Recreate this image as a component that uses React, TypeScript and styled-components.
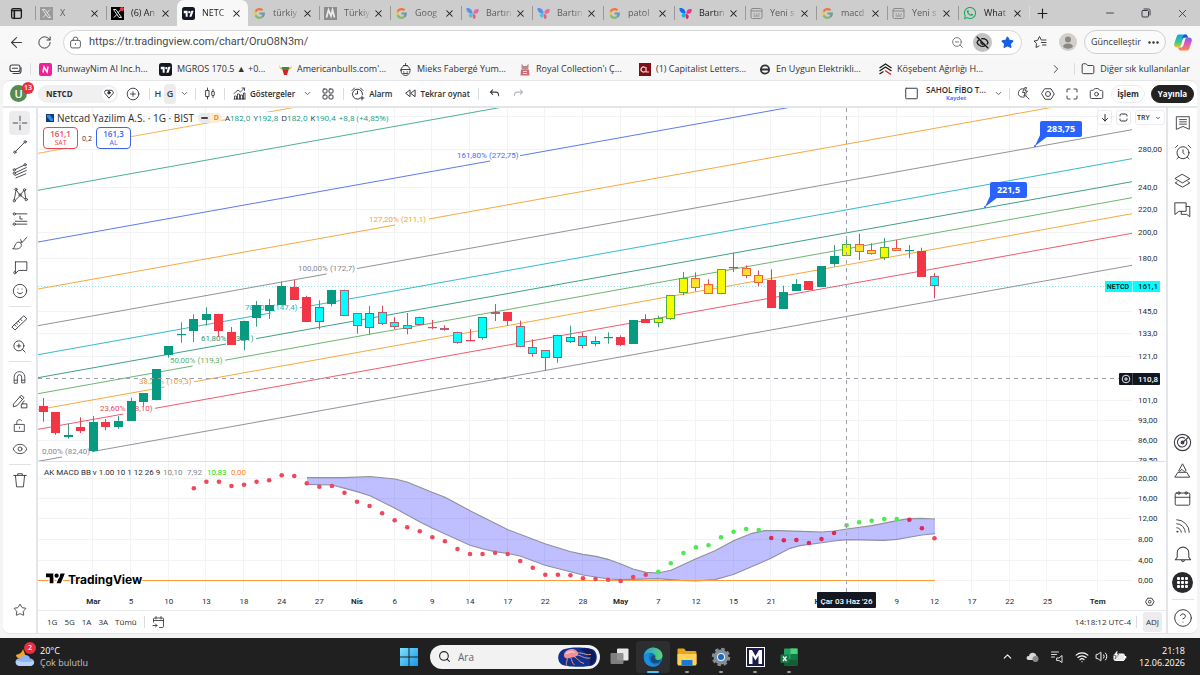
import React from "react";
import styled, { createGlobalStyle, css } from "styled-components";
import {
  X, Plus, Minus, ArrowLeft, RotateCw, ZoomOut, ZoomIn, EyeOff, Star, ChevronDown, ChevronRight, ChevronUp,
  Folder, Camera, Wifi, Volume2, Search, Eye, Smile,
  CircleHelp, AlarmClock, CirclePlus,
} from "lucide-react";
import { FcGoogle } from "react-icons/fc";
import { FaWhatsapp } from "react-icons/fa";

const UI = `"Open Sans", "Noto Sans", sans-serif`;
const NUMERIC = `Roboto, "Open Sans", sans-serif`;
const INK = "#2a2c33";
const STROKE = "#3b3d44";
const RULE = "#e4e5e9";

const GlobalStyle = createGlobalStyle`
  * { box-sizing: border-box; }
  body { margin: 0; background: #f4f4f5; font-family: ${UI}; color: ${INK}; }
  button, input, select { font: inherit; color: inherit; margin: 0; padding: 0; border: 0; background: none; }
  svg { display: block; flex: none; }
`;

/* ---------- shared parts ---------- */

const Page = styled.div`
  min-height: 100vh;
  display: flex;
  flex-direction: column;
`;

const IconButton = styled.button<{ $w?: number; $h?: number; $on?: boolean; $color?: string }>`
  flex: none;
  width: ${(p) => p.$w ?? 24}px;
  height: ${(p) => p.$h ?? 24}px;
  display: flex;
  align-items: center;
  justify-content: center;
  border-radius: 4px;
  color: ${(p) => p.$color ?? STROKE};
  ${(p) => p.$on && css`background: #ececee;`}
`;

const Gap = styled.span<{ $w: number }>`
  flex: none;
  width: ${(p) => p.$w}px;
`;

const Divider = styled.span<{ $h?: number; $mx?: number }>`
  flex: none;
  width: 1px;
  height: ${(p) => p.$h ?? 12}px;
  margin: 0 ${(p) => p.$mx ?? 0}px;
  background: #dcdce0;
`;

const Spacer = styled.span`
  flex: 1;
`;

type DrawProps = { size?: number; w?: number; vb?: string; sw?: number; children: React.ReactNode };
const Draw = ({ size = 16, w, vb = "0 0 28 28", sw = 1.6, children }: DrawProps) => (
  <svg width={w ?? size} height={size} viewBox={vb} fill="none" stroke="currentColor" strokeWidth={sw}
    strokeLinecap="round" strokeLinejoin="round" aria-hidden="true">{children}</svg>
);

/* ---------- favicons ---------- */

const TvTile = ({ size = 13 }: { size?: number }) => (
  <svg width={size} height={size} viewBox="0 0 26 26">
    <rect width="26" height="26" rx="5" fill="#131722" />
    <g fill="#fff" transform="translate(3.500 5) scale(.66)">
      <path d="M14 22H7V11H0V4h14v18ZM28 22h-8l7.500-18h8L28 22Z" transform="scale(.84 1)" /><circle cx="17" cy="8" r="3.500" />
    </g>
  </svg>
);
const XTile = ({ dot = false }: { dot?: boolean }) => (
  <svg width="13" height="13" viewBox="0 0 26 26">
    <rect width="26" height="26" fill={dot ? "#000" : "#777"} />
    <path d="M5 5h5l11 16h-5zM20 5l-6.500 7M12 14.500 6 21" stroke="#fff" strokeWidth="1.800" fill="none" />
    {dot && <circle cx="22" cy="4" r="4" fill="#f23645" />}
  </svg>
);
const MTile = () => (
  <svg width="13" height="13" viewBox="0 0 26 26">
    <rect width="26" height="26" fill="#606060" />
    <path d="M5 21 9 6l5 12 3-12 4 15" stroke="#fff" strokeWidth="3.500" fill="none" />
  </svg>
);
const Butterfly = () => (
  <svg width="13" height="13" viewBox="0 0 26 26">
    <path d="M1 2c8-1 12 4 12 11C7 14 0 10 1 2Z" fill="#0a6ff0" />
    <path d="M13 12c-6 0-10 4-6 8s7-1 6-8Z" fill="#0bb8e8" />
    <path d="M15 13c-1-6 3-10 10-9 2 7-3 11-10 9Z" fill="#f2308b" />
    <path d="M14 14c5 0 7 5 4 9s-6-3-4-9Z" fill="#e8224a" />
  </svg>
);
const PageIcon = () => (
  <Draw size={13} vb="0 0 26 26" sw={2}>
    <rect x="2" y="3" width="22" height="20" rx="3" /><path d="M2 8h22M8 14h1M13 14h1M18 14h1M8 18h10" />
  </Draw>
);

/* ---------- tab strip ---------- */

const TabStrip = styled.header`
  height: 26px;
  display: flex;
  align-items: center;
  background: #cdcdcd;
`;
const TabList = styled.nav`
  display: flex;
  flex: 0 1 994px;
  min-width: 0;
  height: 100%;
  margin-left: 3px;
`;
const Tab = styled.div<{ $active?: boolean; $line?: boolean }>`
  flex: 1 1 0;
  min-width: 0;
  display: flex;
  align-items: center;
  position: relative;
  padding: 0 6px 0 5px;
  ${(p) => p.$active && css`background: #f8f8f8; border-radius: 7px 7px 0 0;`}
  ${(p) => p.$line && css`
    &::before { content: ""; position: absolute; left: 0; top: 6px; height: 14px; width: 1px; background: #999; }
  `}
`;
const TabButton = styled.button<{ $dim?: boolean }>`
  flex: 1;
  min-width: 0;
  display: flex;
  align-items: center;
  gap: 7px;
  text-align: left;
  font-size: 9px;
  line-height: 14px;
  color: ${(p) => (p.$dim ? "#5c5c5c" : "#1b1b1b")};
  svg { opacity: ${(p) => (p.$dim ? 0.6 : 1)}; }
`;
const TabText = styled.span`
  flex: 1;
  min-width: 0;
  overflow: hidden;
  white-space: nowrap;
  margin-right: 2px;
  mask-image: linear-gradient(90deg, #000 65%, transparent);
`;

const tabs: { icon: React.ReactNode; text: string; dim?: boolean; active?: boolean }[] = [
  { icon: <XTile />, text: "X", dim: true },
  { icon: <XTile dot />, text: "(6) An" },
  { icon: <TvTile />, text: "NETC", active: true },
  { icon: <FcGoogle size={13} />, text: "türkiy", dim: true },
  { icon: <MTile />, text: "Türkiy", dim: true },
  { icon: <FcGoogle size={13} />, text: "Goog", dim: true },
  { icon: <Butterfly />, text: "Bartın", dim: true },
  { icon: <Butterfly />, text: "Bartın", dim: true },
  { icon: <FcGoogle size={13} />, text: "patol", dim: true },
  { icon: <Butterfly />, text: "Bartın" },
  { icon: <PageIcon />, text: "Yeni s", dim: true },
  { icon: <FcGoogle size={13} />, text: "macd", dim: true },
  { icon: <PageIcon />, text: "Yeni s", dim: true },
  { icon: <FaWhatsapp size={14} color="#1aa75c" />, text: "What" },
];

const Tabs = () => (
  <TabStrip>
    <IconButton $w={32} aria-label="Sekme işlemleri" $color="#1b1b1b">
      <Draw size={13} vb="0 0 24 24" sw={2.4}><rect x="3" y="3" width="18" height="18" rx="3" /><path d="M3 6.500h18M8 8v13" strokeWidth="3" /></Draw>
    </IconButton>
    <TabList>
      {tabs.map((t, i) => (
        <Tab key={i} $active={t.active} $line={i !== 2 && i !== 3}>
          <TabButton $dim={t.dim}>{t.icon}<TabText>{t.text}</TabText></TabButton>
          <IconButton $w={11} $h={16} $color="#1b1b1b" aria-label="Sekmeyi kapat"><X size={11} strokeWidth={2.2} /></IconButton>
        </Tab>
      ))}
    </TabList>
    <Divider $h={14} />
    <IconButton $w={24} $color="#1b1b1b" aria-label="Yeni sekme"><Plus size={15} strokeWidth={1.8} /></IconButton>
    <Spacer />
    <IconButton $w={36} aria-label="Küçült"><Minus size={12} strokeWidth={1.8} /></IconButton>
    <IconButton $w={36} aria-label="Geri yükle">
      <Draw size={10} vb="0 0 20 20" sw={2}><rect x="2" y="5" width="13" height="13" rx="2" /><path d="M6 2h9q3 0 3 3v9" /></Draw>
    </IconButton>
    <IconButton $w={36} aria-label="Kapat"><X size={13} strokeWidth={1.6} /></IconButton>
  </TabStrip>
);

/* ---------- address row ---------- */

const AddressRow = styled.div`
  height: 32px;
  display: flex;
  align-items: center;
  padding: 0 1px 0 2px;
  background: #f8f8f8;
`;
const AddressField = styled.label`
  flex: 1;
  height: 25px;
  display: flex;
  align-items: center;
  margin: 0 6px 0 5px;
  padding: 0 2px 0 5px;
  border: 1px solid #d6d6d6;
  border-radius: 13px;
  background: #fff;
  color: #5c5c5c;
`;
const AddressInput = styled.input`
  flex: 1;
  min-width: 0;
  margin-left: 7px;
  outline: none;
  font-family: ${NUMERIC};
  font-size: 11px;
  line-height: 16px;
  color: #4a4a4a;
`;
const RoundBadge = styled.span`
  width: 19px;
  height: 19px;
  display: grid;
  place-items: center;
  border-radius: 50%;
  background: #c2c2c2;
  color: #111;
`;
const UpdateButton = styled.button`
  height: 24px;
  width: 82px;
  display: flex;
  align-items: center;
  justify-content: center;
  gap: 7px;
  border: 1px solid #cfcfcf;
  border-radius: 12px;
  background: #fbfbfb;
  font-size: 9px;
  line-height: 14px;
  color: #333;
`;

const Address = () => (
  <AddressRow>
    <IconButton $w={28} aria-label="Geri"><ArrowLeft size={17} strokeWidth={1.5} /></IconButton>
    <IconButton $w={28} aria-label="Yenile"><RotateCw size={15} strokeWidth={1.6} /></IconButton>
    <AddressField>
      <Draw size={13} vb="0 0 24 24" sw={1.8}><rect x="3" y="8" width="18" height="14" rx="3" /><path d="M8 8V5q0-3 4-3t4 3v3M12 14v1.500" /></Draw>
      <AddressInput aria-label="Adres" defaultValue="https://tr.tradingview.com/chart/OruO8N3m/" />
      <IconButton $w={25} aria-label="Uzaklaştır" $color="#777"><ZoomOut size={13} strokeWidth={1.8} /></IconButton>
      <IconButton $w={25} aria-label="İzleme engelleme"><RoundBadge><EyeOff size={13} strokeWidth={2.4} /></RoundBadge></IconButton>
      <IconButton $w={24} aria-label="Sık kullanılan" $color="#1a5fe0"><Star size={13} fill="#1a5fe0" /></IconButton>
    </AddressField>
    <IconButton $w={24} aria-label="Sık kullanılanlar">
      <Draw size={14} vb="0 0 28 28" sw={2}><path d="M16 9 13 3l-4 8-7 1 5 5-1 8 6-3M17 10h9M17 15h9M19 20h7" /></Draw>
    </IconButton>
    <IconButton $w={32} aria-label="Profil">
      <svg width="18" height="18" viewBox="0 0 36 36"><circle cx="18" cy="18" r="18" fill="#d2cfcc" /><circle cx="18" cy="13" r="6" fill="#8b8783" /><path d="M8 27c1-8 19-8 20 0-5 6-15 6-20 0Z" fill="#8b8783" /></svg>
    </IconButton>
    <UpdateButton>Güncelleştir
      <svg width="11" height="3" viewBox="0 0 11 3" fill="#333"><circle cx="1.500" cy="1.500" r="1.200" /><circle cx="5.500" cy="1.500" r="1.200" /><circle cx="9.500" cy="1.500" r="1.200" /></svg>
    </UpdateButton>
    <IconButton $w={33} aria-label="Copilot">
      <svg width="18" height="17" viewBox="0 0 36 34">
        <defs>
          <linearGradient id="cpA" x1="0" y1="0" x2="0" y2="1"><stop offset="0" stopColor="#1a9df0" /><stop offset=".6" stopColor="#3ecf7a" /><stop offset="1" stopColor="#f4c22b" /></linearGradient>
          <linearGradient id="cpB" x1="0" y1="0" x2="0" y2="1"><stop offset="0" stopColor="#7b5cf0" /><stop offset=".5" stopColor="#e45bb8" /><stop offset="1" stopColor="#ff8a3c" /></linearGradient>
        </defs>
        <path d="M10 1h13c3 0 4 3 5 6h-6c-3 0-4 2-5 5l-3 10c-1 3-2 5-5 5H6c-5 0-7-4-5-9L5 6c1-3 2-5 5-5Z" fill="url(#cpA)" />
        <path d="M26 33H13c-3 0-4-3-5-6h6c3 0 4-2 5-5l3-10c1-3 2-5 5-5h3c5 0 7 4 5 9l-4 12c-1 3-2 5-5 5Z" fill="url(#cpB)" />
        <path d="M23 1c-4 0-5 3-6 6l-1 5c1-3 2-5 6-5h6c-1-3-2-6-5-6Z" fill="#1457d0" />
      </svg>
    </IconButton>
  </AddressRow>
);

/* ---------- bookmarks ---------- */

const BookmarkBar = styled.nav`
  height: 22px;
  display: flex;
  align-items: center;
  background: #f7f7f7;
  padding-right: 10px;
`;
const Bookmark = styled.a<{ $w?: number }>`
  flex: 0 1 ${(p) => (p.$w ? p.$w + "px" : "auto")};
  min-width: 0;
  display: flex;
  align-items: center;
  gap: 5px;
  overflow: hidden;
  white-space: nowrap;
  text-decoration: none;
  font-size: 9px;
  line-height: 14px;
  color: #333;
`;

const bookmarks: [React.ReactNode, string][] = [
  [<svg width="13" height="13" viewBox="0 0 26 26"><rect width="26" height="26" rx="4" fill="#f0209a" /><path d="M8 19 10 8l6 10 2-11" stroke="#fff" strokeWidth="3" fill="none" /></svg>, "RunwayNim AI Inc.h..."],
  [<TvTile />, "MGROS 170.5 ▲ +0..."],
  [<svg width="13" height="13" viewBox="0 0 26 26"><path d="M0 2c0 6 3 8 8 8v4H6C2 12-1 7 0 2ZM26 2c0 6-3 8-8 8v4h2c4-2 7-7 6-12Z" fill="#e8b21e" /><path d="M5 8h16l-3 7H8Z" fill="#2f8f3f" /><path d="M7 14h12l-3 10h-6Z" fill="#d3222a" /></svg>, "Americanbulls.com'..."],
  [<Draw size={13} vb="0 0 26 26" sw={1.8}><path d="M13 1v3M9 5h8M4 15C4 9 8 5 13 5s9 4 9 10-4 10-9 10-9-4-9-10ZM4 13h18M9 18h1M16 18h1M9 21h8" /></Draw>, "Mieks Fabergé Yum..."],
  [<svg width="12" height="13" viewBox="0 0 24 26"><path d="M5 1l4 5h6l4-5v9l-2 3H7l-2-3Z" fill="#b98a8a" /><path d="M4 13h16l1 12H3Z" fill="#cf6b74" /><path d="M8 17h8M8 21h8" stroke="#f0d8d8" strokeWidth="2" /></svg>, "Royal Collection'ı Ç..."],
  [<svg width="12" height="13" viewBox="0 0 24 26"><rect width="24" height="26" fill="#7d1016" /><path d="M12 9a5 5 0 1 0 0 8M14 8v10h6" stroke="#f3dcdc" strokeWidth="2.400" fill="none" /></svg>, "(1) Capitalist Letters..."],
  [<Draw size={11} w={12} vb="0 0 24 24" sw={4}><circle cx="12" cy="12" r="9" /><path d="M5 12h14" /></Draw>, "En Uygun Elektrikli..."],
  [<svg width="13" height="12" viewBox="0 0 26 24" fill="none" strokeWidth="2.600"><path d="M1 10 13 2l12 8M1 16l12-8 12 8" stroke="#1a1a1a" /><path d="M1 22l8-5" stroke="#1a1a1a" /><path d="m12 15 12 8" stroke="#d22" /></svg>, "Köşebent Ağırlığı H..."],
];

const Bookmarks = () => (
  <BookmarkBar>
    <IconButton $w={30} aria-label="Kenar çubuğu">
      <Draw size={12} w={13} vb="0 0 26 24" sw={2.2}><rect x="2" y="4" width="20" height="13" rx="4" /><path d="M7 10.500h10M8 21h11q5 0 5-5V9" /></Draw>
    </IconButton>
    <Divider />
    <Gap $w={8} />
    {bookmarks.map(([icon, text], i) => <Bookmark key={i} href="#" $w={120}>{icon}{text}</Bookmark>)}
    <Spacer />
    <IconButton $w={24} aria-label="Daha fazla"><ChevronRight size={14} strokeWidth={1.6} /></IconButton>
    <Divider $mx={6} />
    <Bookmark href="#"><Folder size={14} strokeWidth={1.6} />Diğer sık kullanılanlar</Bookmark>
  </BookmarkBar>
);

/* ---------- chart application ---------- */

const AppFrame = styled.main`
  flex: 1;
  display: flex;
  flex-direction: column;
  margin: 0 3px 4px;
  border: 1px solid ${RULE};
  border-width: 1px 0;
  border-radius: 7px;
  background: ${RULE};
  overflow: hidden;
`;
const Toolbar = styled.div`
  height: 25px;
  flex: none;
  display: flex;
  align-items: center;
  margin-bottom: 2px;
  padding: 0 3px 0 4px;
  background: #fff;
  font-size: 9px;
  line-height: 12px;
  font-weight: 600;
`;
const Avatar = styled.button`
  position: relative;
  width: 26px;
  height: 24px;
  margin-right: 5px;
`;
const AvatarDisc = styled.span`
  width: 17px;
  height: 17px;
  margin: 0 0 0 3px;
  display: grid;
  place-items: center;
  border-radius: 50%;
  background: #558b51;
  color: #fff;
  font-size: 11px;
  line-height: 12px;
`;
const Badge = styled.span<{ $x: number; $y: number }>`
  position: absolute;
  left: ${(p) => p.$x}px;
  top: ${(p) => p.$y}px;
  width: 12px;
  height: 12px;
  display: grid;
  place-items: center;
  border-radius: 50%;
  background: #e5303f;
  color: #fff;
  font-size: 7px;
  line-height: 10px;
  font-weight: 600;
`;
const SymbolPill = styled.button`
  width: 80px;
  height: 18px;
  display: flex;
  align-items: center;
  justify-content: space-between;
  padding: 0 2px 0 8px;
  border-radius: 9px;
  background: #f0f0f1;
  font-size: 8px;
  font-weight: 700;
`;
const SymbolEnd = styled.span`
  display: grid;
  place-items: center;
  width: 14px;
  height: 14px;
  border-radius: 50%;
  background: #fff;
`;
const TextButton = styled.button<{ $ml?: number }>`
  display: flex;
  align-items: center;
  gap: 4px;
  margin-left: ${(p) => p.$ml ?? 0}px;
  font-size: 8px;
  line-height: 12px;
  font-weight: 600;
  white-space: nowrap;
`;
const LayoutName = styled.button`
  width: 62px;
  font-size: 8px;
  line-height: 9px;
  font-weight: 600;
  white-space: nowrap;
  text-align: center;
`;
const Save = styled.span`
  display: block;
  font-size: 6px;
  line-height: 8px;
  color: #2962ff;
`;
const Pill = styled.button<{ $dark?: boolean; $w: number }>`
  width: ${(p) => p.$w}px;
  height: 18px;
  border-radius: 9px;
  border: 1px solid ${(p) => (p.$dark ? "#222" : "#ececee")};
  background: ${(p) => (p.$dark ? "#222" : "#fff")};
  color: ${(p) => (p.$dark ? "#fff" : INK)};
  font-size: 8px;
  line-height: 12px;
  font-weight: 700;
`;

const Hex = ({ size }: { size: number }) => (
  <Draw size={size} vb="0 0 28 28" sw={1.9}><path d="M8 3.500h12L26.500 14 20 24.500H8L1.500 14Z" /><circle cx="14" cy="14" r="5" /></Draw>
);

const TopToolbar = () => (
  <Toolbar>
    <Avatar aria-label="Kullanıcı menüsü"><AvatarDisc>U</AvatarDisc><Badge $x={15} $y={0}>13</Badge></Avatar>
    <SymbolPill>NETCD
      <SymbolEnd><Draw size={10} vb="0 0 24 24" sw={2.2}><path d="M5 3h14l4 6-11 13L1 9Z" /><circle cx="12" cy="9" r="3" fill="currentColor" /></Draw></SymbolEnd>
    </SymbolPill>
    <IconButton $w={29} aria-label="Karşılaştır"><CirclePlus size={14} strokeWidth={1.6} /></IconButton>
    <Divider $mx={2} />
    <IconButton $w={12} $h={20}>H</IconButton>
    <IconButton $w={12} $h={20} $on>G</IconButton>
    <IconButton $w={16} aria-label="Zaman dilimi"><ChevronDown size={9} /></IconButton>
    <Divider $mx={3} />
    <IconButton $w={23} aria-label="Mumlar">
      <Draw size={13} vb="0 0 26 26" sw={1.9}><path d="M7 2v5M7 19v5M18 5v4M18 17v4" /><rect x="4" y="7" width="6" height="12" /><rect x="15.500" y="9" width="5" height="8" rx="1" /></Draw>
    </IconButton>
    <Divider $mx={2} />
    <TextButton $ml={6}>
      <Draw size={13} vb="0 0 26 26" sw={1.6}><path d="M2 13 10 6l5 4 8-8M18 2h5v5M3 24v-6h4v6M9 24V14h4v10M15 24v-8h4v8M21 24V12h3v12M2 24h22" /></Draw>
      Göstergeler
    </TextButton>
    <IconButton $w={25} aria-label="Gösterge menüsü"><ChevronDown size={9} /></IconButton>
    <IconButton $w={16} aria-label="Şablonlar">
      <Draw size={12} vb="0 0 24 24" sw={2}><rect x="2" y="2" width="8" height="8" rx="2" /><rect x="14" y="2" width="8" height="8" rx="2" /><rect x="2" y="14" width="8" height="8" rx="2" /><rect x="14" y="14" width="8" height="8" rx="2" /></Draw>
    </IconButton>
    <Divider $mx={7} />
    <TextButton>
      <Draw size={14} vb="0 0 28 28" sw={1.9}><path d="M17 23.500A10 10 0 1 1 23 15M13 8v6H9M2 7l5-5M19 2l5 5M22 18v8M18 22h8" /></Draw>
      Alarm
    </TextButton>
    <TextButton $ml={13}>
      <Draw size={11} vb="0 0 24 24" sw={2}><path d="M11 5v14L2 12ZM22 5v14l-9-7Z" /></Draw>
      Tekrar oynat
    </TextButton>
    <Divider $mx={8} />
    <IconButton $w={16} aria-label="Geri al"><Draw size={11} vb="0 0 24 24" sw={2.2}><path d="M8 4 3 9l5 5M3 9h12q6 0 6 8" /></Draw></IconButton>
    <IconButton $w={32} aria-label="Yinele" $color="#b6b7bc"><Draw size={11} vb="0 0 24 24" sw={2.2}><path d="m16 4 5 5-5 5M21 9H9q-6 0-6 8" /></Draw></IconButton>
    <Spacer />
    <IconButton $w={16} aria-label="Yerleşim"><Draw size={13} vb="0 0 26 26" sw={2}><rect x="1.500" y="2.500" width="23" height="21" rx="1" /></Draw></IconButton>
    <Gap $w={6} />
    <LayoutName>SAHOL FİBO T...<Save>Kaydet</Save></LayoutName>
    <IconButton $w={22} aria-label="Yerleşim menüsü"><ChevronDown size={9} /></IconButton>
    <Divider />
    <IconButton $w={26} aria-label="Hızlı arama">
      <Draw size={13} vb="0 0 26 26" sw={1.8}><path d="M14 4a8.500 8.500 0 1 0 5 12M18 18l6 6M15 2l-4 9h5l-2 7 7-10h-5l3-6Z" /></Draw>
    </IconButton>
    <IconButton aria-label="Ayarlar"><Hex size={14} /></IconButton>
    <IconButton aria-label="Tam ekran"><Draw size={12} vb="0 0 24 24" sw={2}><path d="M2 8V4q0-2 2-2h4M16 2h4q2 0 2 2v4M22 16v4q0 2-2 2h-4M8 22H4q-2 0-2-2v-4" /></Draw></IconButton>
    <IconButton aria-label="Fotoğraf"><Camera size={15} strokeWidth={1.5} /></IconButton>
    <Gap $w={3} />
    <Pill $w={34}>İşlem</Pill>
    <Gap $w={6} />
    <Pill $dark $w={43}>Yayınla</Pill>
  </Toolbar>
);

const Body = styled.div`
  flex: 1;
  display: flex;
  gap: 2px;
`;
const Rail = styled.aside<{ $w: number; $pt?: number; $pb?: number }>`
  flex: none;
  width: ${(p) => p.$w}px;
  display: flex;
  flex-direction: column;
  align-items: center;
  padding: ${(p) => p.$pt ?? 0}px 0 ${(p) => p.$pb ?? 0}px;
  background: #fff;
`;
const RailRule = styled.hr`
  width: 22px;
  height: 1px;
  margin: 3px 0;
  border: 0;
  background: #e2e2e6;
`;
const AppsDisc = styled.span`
  width: 21px;
  height: 21px;
  display: grid;
  place-items: center;
  border-radius: 50%;
  background: #2a2a2c;
`;

const n = (cx: number, cy: number, r = 2) => <circle key={`${cx}-${cy}`} cx={cx} cy={cy} r={r} />;

const tools: (null | [string, React.ReactNode])[] = [
  ["İmleç", <Draw><path d="M14 2v8M14 18v8M2 14h8M18 14h8M14 14h0" /></Draw>],
  ["Trend çizgisi", <Draw><path d="M6.500 21.500l15-15" />{n(5, 23)}{n(23, 5)}</Draw>],
  ["Fibonacci", <Draw><path d="M6 11 21 4M6 17l19-9M5 22l20-9M7 26l17-7" />{n(4, 12)}{n(23, 3)}{n(4, 18)}</Draw>],
  ["Formasyonlar", <Draw><path d="M4 22 7 6M8 6l5 7M15 13l6-7M22 7l2 13M6 23l7-7M15 15l8 6" />{n(4, 24)}{n(7, 4)}{n(14, 14)}{n(22, 5)}{n(25, 22)}</Draw>],
  ["Tahmin", <Draw><path d="M6 5h20M6 18h20M6 23h20M14 9v5h4" />{n(4, 5)}{n(4, 23)}</Draw>],
  ["Fırça", <Draw><path d="M2 24c4-3 2-8 7-11 5-2 9 3 7 7-3 5-9 5-14 4ZM15 13c4 2 6-5 11-9M15 8l2 4" /></Draw>],
  ["Metin", <Draw><path d="M6 5h20v15H12l-5 4M6 5v17" />{n(5, 24)}</Draw>],
  ["İkonlar", <Smile size={16} strokeWidth={1.4} />],
  null,
  ["Ölçüm", <Draw size={17}><path d="M2 21 21 3l5 5L7 26Zm4-3 2 2m1-5 2 2m1-5 2 2m2-5 2 2" /></Draw>],
  ["Yakınlaştır", <ZoomIn size={15} strokeWidth={1.5} />],
  null,
  ["Mıknatıs", <Draw size={15}><path d="M4 24V13a10 10 0 0 1 20 0v11h-6V13a4 4 0 0 0-8 0v11ZM4 19h6M18 19h6" /></Draw>],
  ["Çizim modu", <Draw><path d="M3 19 16 4l5 4L9 22l-6 2ZM14 7l4 4M17 19h9v7h-9ZM19 19v-3q0-2 2.500-2" /></Draw>],
  ["Kilitle", <Draw size={15}><path d="M5 12h18v13H5ZM9 12V8a5 5 0 0 1 9-3M14 17v2" /></Draw>],
  ["Gizle", <Eye size={16} strokeWidth={1.3} />],
  null,
  ["Sil", <Draw size={16}><path d="M3 6h22M10 6V3h8v3M6 6l2 20h12l2-20" /></Draw>],
];

const LeftRail = () => (
  <Rail $w={33} $pt={3} $pb={11}>
    {tools.map((t, i) => t ? <IconButton key={i} $w={21} $on={i === 0} aria-label={t[0]}>{t[1]}</IconButton> : <RailRule key={i} />)}
    <Spacer />
    <IconButton aria-label="Favoriler"><Star size={14} strokeWidth={1.5} /></IconButton>
  </Rail>
);

const RightRail = () => (
  <Rail $w={29}>
    <IconButton $h={29} aria-label="İzleme listesi"><Draw><path d="M3 3h22v22l-11-5-11 5ZM8 8h12M8 12h12M8 16h12" /></Draw></IconButton>
    <IconButton $h={29} aria-label="Alarmlar"><AlarmClock size={18} strokeWidth={1.3} /></IconButton>
    <IconButton $h={29} aria-label="Nesneler"><Draw size={17}><path d="m14 4 12 7-12 7-12-7ZM5 16l-3 2 12 7 12-7-3-2" /></Draw></IconButton>
    <IconButton $h={29} aria-label="Sohbet"><Draw size={17}><path d="M2 3h18v14H8l-6 5ZM20 9h6v17l-5-4h-9v-5" /></Draw></IconButton>
    <Spacer />
    <IconButton $h={28} aria-label="Tarayıcı"><Draw size={19}><circle cx="14" cy="14" r="12" /><path d="M20 11a7 7 0 1 1-3-3.500M14 14l8-7" /><circle cx="14" cy="14" r="2" fill="currentColor" /></Draw></IconButton>
    <IconButton $h={28} aria-label="Fikirler"><Draw size={17}><path d="M2 25h24l-5-8H7ZM8 14l6-11 6 11-3 2-4-4-3 3Z" /></Draw></IconButton>
    <IconButton $h={28} aria-label="Takvim"><Draw size={17}><path d="M4 5h20q2 0 2 2v16q0 2-2 2H4q-2 0-2-2V7q0-2 2-2ZM2 12h24" />{n(8, 5)}{n(20, 5)}</Draw></IconButton>
    <IconButton $h={28} aria-label="Akış"><Draw size={16}><path d="M3 3a22 22 0 0 1 22 22M3 10a15 15 0 0 1 15 15M3 17a8 8 0 0 1 8 8" /><circle cx="4" cy="24" r="1" /></Draw></IconButton>
    <IconButton $h={28} aria-label="Bildirimler"><Draw size={18}><path d="M2 23h24l-3-4v-7c0-6-4-8-9-9-5 1-9 3-9 9v7ZM11 23q3 5 6 0" /></Draw></IconButton>
    <IconButton $h={28} aria-label="Ürünler">
      <AppsDisc>
        <svg width="13" height="13" viewBox="0 0 13 13" fill="#fff">
          {[1, 5, 9].map((y) => [1, 5, 9].map((x) => <rect key={`${x}${y}`} x={x} y={y} width="3" height="3" rx="1" />))}
        </svg>
      </AppsDisc>
    </IconButton>
    <RailRule />
    <IconButton $h={30} aria-label="Yardım"><CircleHelp size={20} strokeWidth={1.2} /></IconButton>
  </Rail>
);

/* ---------- chart drawing ---------- */

const LEFT = 38;
const RIGHT = 1132;
const SLOPE = 196 / 1094;
const barX = (i: number) => 43.2 + 12.553 * i;

/* Each bar: kind, body top, body bottom, wick high, wick low.
   Kind g/r is a solid body; c/y is a cyan or yellow body with the second letter giving its outline. */
type Bar = [string, number, number, number, number];
const bars: Bar[] = [
  ["r", 405.7, 412.3, 398, 421.7], ["r", 412, 433.3, 412, 434.7], ["g", 434.7, 437.3, 423.7, 438.7],
  ["r", 426.7, 431.3, 417.3, 433], ["g", 421.7, 451, 416, 452], ["r", 421.7, 427.3, 419, 430.3],
  ["g", 420.7, 427, 416, 428.7], ["g", 401, 420.7, 397.7, 420.7], ["g", 393, 402.3, 393, 406.7],
  ["g", 369, 400.3, 369, 400.3], ["g", 346.3, 355, 346.3, 357.7], ["g", 334, 335, 322.3, 342.7],
  ["g", 319, 330.7, 314.3, 342], ["g", 313.7, 320.3, 307.3, 325.7], ["r", 313.7, 330.7, 313.7, 337],
  ["r", 332, 345, 327, 345], ["g", 320.7, 340, 320.7, 350.3], ["g", 305, 318, 301, 326.7],
  ["g", 305, 311, 299, 319], ["g", 285.7, 305.3, 281.7, 305.3], ["r", 287.3, 300, 279.7, 300],
  ["r", 297.3, 321.7, 295.7, 321.7], ["cg", 307.3, 321.7, 300.3, 329.3], ["g", 290, 303.7, 289.7, 306.3],
  ["cr", 289.7, 316, 289.7, 316], ["cr", 313.3, 325.7, 313.3, 333.7], ["cg", 313.3, 327.7, 306, 334.3],
  ["cr", 312.3, 324, 305.7, 325], ["cr", 322.3, 327.3, 317, 329.3], ["cr", 325.3, 329, 313, 334.3],
  ["cr", 316.7, 325, 316.7, 325], ["cr", 327, 328.3, 320, 329.3], ["cr", 328.3, 329.7, 325.3, 330.7],
  ["cr", 331.7, 342.7, 331.7, 343.7], ["r", 340, 341, 329.3, 341.3], ["cg", 317.3, 337.7, 317.3, 339.7],
  ["cr", 312, 314, 304, 321], ["r", 312.3, 321, 312.3, 325.7], ["cr", 326.3, 347.3, 320.7, 347.3],
  ["cr", 347.3, 353.7, 339.3, 356.7], ["cr", 350.3, 357.7, 350.3, 370.3], ["cg", 334.7, 357.7, 334.7, 362.7],
  ["cg", 337, 342, 325.7, 343], ["cr", 336.3, 346, 332.3, 348.3], ["cg", 341, 344.3, 336.3, 346.3],
  ["g", 337, 338, 332.3, 343.7], ["r", 337, 345, 335.3, 346], ["g", 320.3, 343.7, 320.3, 343.7],
  ["r", 319, 323, 314.3, 323], ["yg", 318.3, 322.7, 315.7, 327.3], ["yg", 295.3, 318.7, 295.3, 319.7],
  ["yg", 278.3, 293.3, 272, 295.3], ["yr", 278.3, 287.7, 272.3, 291.3], ["yr", 284.3, 293.7, 279.3, 293.7],
  ["yg", 269.3, 293.7, 269.3, 294.3], ["r", 267.3, 268.3, 252.7, 272], ["yr", 267.7, 275.7, 265.3, 278.3],
  ["yr", 275.3, 282.7, 270.3, 286.3], ["r", 280.3, 308, 269.3, 308], ["g", 292.3, 308.7, 285.7, 308.7],
  ["g", 284, 290.7, 279, 290.7], ["r", 281, 290.3, 281, 290.3], ["g", 266.3, 286.7, 266.3, 286.7],
  ["g", 256.3, 264, 245, 266.7], ["yg", 244.3, 256, 238.7, 256], ["yr", 244.3, 251.7, 233.7, 260],
  ["yr", 250.3, 254, 243.3, 254.7], ["yg", 247.3, 257.7, 238, 260], ["yr", 247.7, 250.7, 240, 251],
  ["g", 250.3, 251.3, 245, 258.3], ["r", 250.7, 276.7, 247.7, 276.7], ["cr", 276.3, 285.7, 273, 298.3],
];

const macd = [
  488.3, 481.7, 481.7, 486, 484.7, 481.7, 480.3, 475.3, 476, 483.3, 486.7, 486, 492.7, 501.7, 506, 513.3, 520.3, 527.3,
  531.3, 537.3, 541.3, 549, 554, 554, 552.7, 554, 561, 567.7, 574.7, 574.7, 575.3, 578.3, 579, 579.7, 581, 577, 574.7,
  571.7, 563.3, 553, 547.3, 545.3, 537.3, 531.7, 529, 530, 538, 540.3, 540, 543, 539, 533, 525.3, 522.3, 520.7, 519,
  519, 519.7, 528.3, 538.3,
];
const rising = (i: number) => (i >= 49 && i <= 57) || (i >= 64 && i <= 68);

const bandTop = "307,477.7 344,477.7 370,476.5 395,479 407,482 432,492.3 445,497.3 470,510.7 508,529.7 545,543.7 570,551.5 583,554.3 596,556.3 608,559.3 621,564 633,569 646,572.3 658,573 671,570.3 696,558.7 715,550.7 734,540.5 752,533.3 765,530.6 778,530.6 809,531.7 822,532 834,531 847,529 872,525.7 897,520.7 909,518.7 922,518.3 935,519";
const bandLow = "307,484.3 332,485 345,488.3 357,491.7 370,495.7 395,508.3 420,522 432,528 470,545.3 483,549 495,551.7 508,553.5 520,556 545,565.3 583,575 608,579 621,579.7 658,578.7 680,580.3 696,581 715,579.7 734,574.3 771,558.3 790,548.3 800,545.7 820,543 834,541 847,539.7 884,540.3 897,539.3 922,535 935,533.7";

type Fib = { y: number; c: string; text?: string; x1?: number; x2?: number; ty?: number };
const fibs: Fib[] = [
  { y: 153.3, c: "#f5a93c" },
  { y: 190.3, c: "#3aa68c" },
  { y: 242, c: "#4a6cf0", text: "161,80% (272,75)", x1: 457, x2: 517, ty: 155 },
  { y: 289, c: "#f5a02c", text: "127,20% (211,1)", x1: 369, x2: 426, ty: 219 },
  { y: 325.7, c: "#85878f", text: "100,00% (172,7)", x1: 298, x2: 354, ty: 268 },
  { y: 354.7, c: "#1fb3c4", text: "78,60% (147,4)", x1: 245, x2: 297, ty: 307 },
  { y: 377.7, c: "#2a957b", text: "61,80% (130,1)", x1: 201, x2: 253, ty: 338 },
  { y: 393.7, c: "#5dad60", text: "50,00% (119,3)", x1: 170, x2: 222, ty: 360 },
  { y: 409.7, c: "#f5a02c", text: "38,20% (109,3)", x1: 139, x2: 191, ty: 381 },
  { y: 429.3, c: "#ee4a5c", text: "23,60% (98,10)", x1: 100, x2: 152, ty: 408 },
  { y: 461.3, c: "#85878f", text: "0,00% (82,40)", x1: 42, x2: 89, ty: 451 },
];

const prices: [number, string][] = [
  [149, "280,00"], [187, "240,0"], [209, "220,0"], [232, "200,0"], [258, "180,0"], [311, "145,0"], [333, "133,0"],
  [356, "121,0"], [400, "101,0"], [420, "93,00"], [440, "86,00"], [478, "20,00"], [498, "16,00"], [518, "12,00"],
  [539, "8,00"], [560, "4,00"], [580, "0,00"],
];
const dates: [number, string, boolean?][] = [
  [4, "Mar", true], [7, "5"], [10, "10"], [13, "13"], [16, "18"], [19, "24"], [22, "27"], [25, "Nis", true], [28, "6"],
  [31, "9"], [34, "14"], [37, "17"], [40, "22"], [43, "28"], [46, "May", true], [49, "7"], [52, "12"], [55, "15"],
  [58, "21"], [62, "Haz", true], [65, ""], [68, "9"], [71, "12"], [74, "17"], [77, "22"], [80, "25"], [84, "Tem", true],
];

const ChartColumn = styled.section`
  flex: 1;
  min-width: 0;
  display: flex;
  flex-direction: column;
  background: #fff;
`;
const ChartArea = styled.div`
  flex: 1;
  position: relative;
`;
const ChartSvg = styled.svg`
  width: 100%;
  height: auto;
  font-family: ${NUMERIC};
  font-size: 8px;
`;

const Candle = ({ bar: [k, top, bottom, high, low], x }: { bar: Bar; x: number }) => {
  const up = k.endsWith("g");
  const line = k[0] === "c" ? (up ? "#0d9a84" : "#b0606e") : k[0] === "y" ? (up ? "#4fae3a" : "#f0643c") : up ? "#089981" : "#f23645";
  const fill = k[0] === "c" ? "#00ffff" : k[0] === "y" ? (up ? "#f6fa00" : "#ffe12e") : line;
  const left = Math.round(x - 4.5) + 0.5;
  const y = Math.round(top);
  return (
    <g>
      <path d={`M${Math.round(x - 0.5) + 0.5} ${high}V${low}`} stroke={up ? "#3b9c88" : "#e0485a"} />
      <rect x={left} y={y + 0.5} width={8} height={Math.max(Math.round(bottom) - y - 1, 0.2)} fill={fill} stroke={line} />
    </g>
  );
};

const Callout = ({ x, y, w, text, px, py }: { x: number; y: number; w: number; text: string; px: number; py: number }) => (
  <g>
    <path d={`M${px} ${py}L${x + 1} ${y + 12}L${x + 8} ${y + 15}Z`} fill="#2962ff" />
    <rect x={x} y={y} width={w} height={16} rx={2} fill="#2962ff" />
    <circle cx={px} cy={py} r={1} fill="#2962ff" />
    <text x={x + w / 2} y={y + 11} fill="#fff" fontFamily={UI} fontSize={9} fontWeight={700} textAnchor="middle">{text}</text>
  </g>
);

const Plot = () => (
  <ChartSvg viewBox="38 108 1128 502" role="img" aria-label="NETCD fiyat grafiği">
    <g stroke="#f2f3f5">
      {dates.map(([i]) => <path key={i} d={`M${Math.round(barX(i)) - 0.5} 108V592`} />)}
      <path d={`M${LEFT} 116.500H${RIGHT}`} />
      {prices.map(([y, t]) => <path key={t} d={`M${LEFT} ${y + 0.5}H${RIGHT}`} />)}
    </g>

    <path d={`M${LEFT} 286.500H1105`} stroke="#8fe3ea" strokeDasharray="1 2" />

    {fibs.map((f, i) => {
      const endY = f.y - 196;
      if (!f.text) return <path key={i} d={`M${LEFT} ${f.y}L${RIGHT} ${endY}`} stroke={f.c} strokeOpacity=".9" />;
      const breakY = f.ty! + 6;
      const breakX = LEFT + (f.y - breakY) / SLOPE;
      const resume = f.x2! + 3;
      return (
        <g key={i}>
          <path d={`M${LEFT} ${f.y}L${breakX} ${breakY}M${resume} ${f.y - (resume - LEFT) * SLOPE}L${RIGHT} ${endY}`} stroke={f.c} strokeOpacity=".9" />
          <text x={f.x1} y={f.ty! + 3} fill={f.c}>{f.text}</text>
        </g>
      );
    })}

    {bars.map((b, i) => <Candle key={i} bar={b} x={barX(i)} />)}

    <path d={`M${bandTop} L${bandLow.split(" ").reverse().join(" ")}Z`} fill="#0000ff" fillOpacity=".25" />
    <polyline points={bandTop} fill="none" stroke="#909296" strokeWidth="1.200" />
    <polyline points={bandLow} fill="none" stroke="#8f8fae" strokeWidth="1.200" />
    <path d="M38 580.500H935" stroke="#ff9a3c" strokeWidth="1.200" />
    {macd.map((y, k) => (
      <circle key={k} cx={barX(k + 12)} cy={y} r={2.3} fill={rising(k + 12) ? "#4fe94f" : k + 12 > 57 && k + 12 < 71 ? "#dc2a50" : "#f0485a"} />
    ))}

    <path d="M38 461.500H1166" stroke="#dfe1e8" />
    <path d="M38 378.500H1119M846.500 108V592" stroke="#9da0a8" strokeDasharray="4 4" />

    <Callout x={1040} y={121} w={42} text="283,75" px={1035} py={146} />
    <Callout x={990} y={182} w={37} text="221,5" px={985} py={207} />

    <g fill={INK}>
      {prices.map(([y, t]) => <text key={t} x={1138} y={y + 3}>{t}</text>)}
      <svg x={1134} y={455} width={30} height={6} viewBox="0 0 30 6"><text x={4} y={8}>79,50</text></svg>
      {dates.map(([i, t, bold]) => <text key={i} x={barX(i)} y={604} textAnchor="middle" fontWeight={bold ? 700 : 400}>{t}</text>)}
    </g>

    <rect x={1105} y={281} width={55} height={11} fill="#00ffff" />
    <path d="M1132.500 281v11" stroke="#fff" strokeOpacity=".6" />
    <text x={1118} y={289} fill="#131722" textAnchor="middle" fontSize={7} fontWeight={600}>NETCD</text>
    <text x={1138} y={289} fill="#131722" fontWeight={500}>161,1</text>

    <rect x={1119} y={373} width={41} height={12} rx={1} fill="#131722" />
    <path d="M1132.500 373v12" stroke="#4a4e59" />
    <g stroke="#fff" fill="none" strokeWidth=".9"><circle cx={1126} cy={379} r={3.8} /><path d="M1124 379h4M1126 377v4" /></g>
    <text x={1138} y={382} fill="#fff" fontWeight={500}>110,8</text>

    <rect x={817} y={592} width={59} height={16} rx={1} fill="#131722" />
    <text x={846.5} y={604} fill="#fff" fontWeight={500} textAnchor="middle">Çar 03 Haz '26</text>

    <text y={475} fill={INK}>
      <tspan x={44}>AK MACD BB v 1.00 10 1 12 26 9</tspan>
      <tspan x={163} fill="#808389">10,10</tspan><tspan x={187} fill="#808389">7,92</tspan>
      <tspan x={207} fill="#12e012">10,83</tspan><tspan x={231} fill="#ff8a12">0,00</tspan>
    </text>

    <g transform="translate(46 571.500) scale(.53)" fill="#000" stroke="#fff" strokeWidth="4" paintOrder="stroke">
      <path d="M14 22H7V11H0V4h14v18ZM28 22h-8l7.500-18h8L28 22Z" /><circle cx="20" cy="8" r="4" />
    </g>
    <text x={68} y={584} fontSize={12} fontWeight={700} fontFamily="Inter, sans-serif" fill="#000" stroke="#fff" strokeWidth={2} paintOrder="stroke">TradingView</text>
    <g transform="translate(1145 597) scale(.34)" fill="none" stroke={INK} strokeWidth="2.600">
      <path d="M8 3.500h12L26.500 14 20 24.500H8L1.500 14Z" /><circle cx="14" cy="14" r="4" />
    </g>
  </ChartSvg>
);

const Legend = styled.div`
  position: absolute;
  left: 8px;
  top: 4px;
  display: flex;
  align-items: center;
  font-size: 10px;
  line-height: 12px;
  white-space: nowrap;
`;
const SymbolName = styled.span`
  margin: 0 4px 0 3px;
`;
const StatusPill = styled.span`
  display: flex;
  align-items: center;
  height: 10px;
  width: 24px;
  margin-right: 3px;
  border-radius: 5px;
  overflow: hidden;
  background: linear-gradient(90deg, #e8e9ec 50%, #fdebd3 50%);
  justify-content: space-around;
  font-size: 7px;
  line-height: 10px;
  font-weight: 700;
  color: #f08a1d;
`;
const Values = styled.span`
  display: flex;
  gap: 3px;
  background: #fff;
  font-size: 8px;
  color: #089981;
  b { font-weight: 400; color: ${INK}; }
`;
const Trade = styled.div`
  position: absolute;
  left: 5px;
  top: 19px;
  display: flex;
  align-items: center;
  font-size: 7px;
  background: #fff;
`;
const TradeButton = styled.button<{ $c: string }>`
  width: 35px;
  height: 22px;
  border: 1px solid ${(p) => p.$c};
  border-radius: 4px;
  background: #fff;
  color: ${(p) => p.$c};
  font-size: 7px;
  line-height: 8px;
  strong { display: block; font-size: 8px; line-height: 10px; font-weight: 600; }
`;
const Spread = styled.span`
  width: 18px;
  text-align: center;
`;
const AxisControls = styled.div`
  position: absolute;
  right: 1px;
  top: 2px;
  display: flex;
  gap: 4px;
  align-items: center;
`;
const AxisButton = styled.button`
  width: 15px;
  height: 15px;
  display: grid;
  place-items: center;
  border: 1px solid #ececef;
  border-radius: 3px;
  background: #fff;
`;
const CurrencyBox = styled.div`
  position: relative;
  width: 30px;
  height: 15px;
  border: 1px solid #ececef;
  border-radius: 3px;
  background: #fff;
  svg { position: absolute; right: 3px; top: 4px; pointer-events: none; }
`;
const CurrencySelect = styled.select`
  display: block;
  width: 100%;
  height: 13px;
  padding-left: 1px;
  appearance: none;
  font-size: 7px;
  line-height: 13px;
  font-weight: 600;
`;

const BottomBar = styled.footer`
  height: 23px;
  flex: none;
  display: flex;
  align-items: center;
  padding: 0 4px 0 9px;
  border-top: 1px solid #e8e9ec;
  font-size: 8px;
  line-height: 12px;
`;
const RangeButton = styled.button`
  margin-right: 7px;
`;
const AdjButton = styled.button`
  width: 19px;
  height: 20px;
  margin-left: 1px;
  border-radius: 3px;
  background: #ececee;
`;

const ohlc = [["A", "182,0"], ["Y", "192,8"], ["D", "182,0"], ["K", "190,4"], ["", "+8,8 (+4,85%)"]];

const Chart = () => (
  <ChartColumn>
    <ChartArea>
      <Plot />
      <Legend>
        <svg width="8" height="8" viewBox="0 0 16 16"><rect width="16" height="16" fill="#123a7a" /><path d="M2 2h6l6 8v4H9L2 6Z" fill="#2f8fe8" /></svg>
        <SymbolName>Netcad Yazilim A.S. · 1G · BIST</SymbolName>
        <StatusPill><svg width="7" height="2"><rect width="7" height="2" rx="1" fill="#444" /></svg>D</StatusPill>
        <Values>{ohlc.map(([k, v]) => <span key={k}><b>{k}</b>{v}</span>)}</Values>
      </Legend>
      <Trade>
        <TradeButton $c="#ee4455"><strong>161,1</strong>SAT</TradeButton>
        <Spread>0,2</Spread>
        <TradeButton $c="#3b66f0"><strong>161,3</strong>AL</TradeButton>
      </Trade>
      <AxisControls>
        <AxisButton aria-label="Aşağı"><Draw size={8} vb="0 0 16 16" sw={2}><path d="M8 1v13M3 9l5 5 5-5" /></Draw></AxisButton>
        <AxisButton aria-label="Büyüt"><Draw size={9} vb="0 0 18 18" sw={2}><path d="M2 6V5q0-3 3-3h8q3 0 3 3v1M2 12v1q0 3 3 3h8q3 0 3-3v-1" /></Draw></AxisButton>
        <CurrencyBox>
          <CurrencySelect aria-label="Para birimi" defaultValue="TRY"><option>TRY</option></CurrencySelect>
          <ChevronDown size={6} strokeWidth={3} />
        </CurrencyBox>
      </AxisControls>
    </ChartArea>
    <BottomBar>
      {["1G", "5G", "1A", "3A", "Tümü"].map((r) => <RangeButton key={r}>{r}</RangeButton>)}
      <Divider />
      <IconButton $w={27} aria-label="Tarihe git">
        <Draw size={13} vb="0 0 26 26" sw={1.8}><path d="M3 12V6q0-2 2-2h16q2 0 2 2v15q0 2-2 2h-6M3 9h20M8 1v5M18 1v5M2 19h8M7 16l3 3-3 3" /></Draw>
      </IconButton>
      <Spacer />
      <span>14:18:12 UTC-4</span>
      <Divider $mx={5} />
      <AdjButton>ADJ</AdjButton>
    </BottomBar>
  </ChartColumn>
);

/* ---------- taskbar ---------- */

const Taskbar = styled.footer`
  height: 37px;
  display: grid;
  grid-template-columns: 1fr auto 1fr;
  align-items: center;
  background: #202020;
  color: #fff;
  font-size: 9px;
  line-height: 12px;
`;
const Weather = styled.button`
  position: relative;
  justify-self: start;
  display: flex;
  align-items: center;
  gap: 5px;
  margin-left: 15px;
  text-align: left;
  color: #fff;
`;
const Muted = styled.span`
  display: block;
  color: #c4c4c4;
`;
const TaskCenter = styled.div`
  display: flex;
  align-items: center;
`;
const SearchBox = styled.label`
  width: 170px;
  height: 24px;
  margin: 0 2px 0 6px;
  padding: 0 3px 0 8px;
  display: flex;
  align-items: center;
  border-radius: 12px;
  background: #f2f2f2;
  color: #222;
`;
const SearchInput = styled.input`
  flex: 1;
  min-width: 0;
  margin-left: 7px;
  font-size: 10px;
  line-height: 14px;
  outline: none;
  &::placeholder { color: #666; opacity: 1; }
`;
const TaskButton = styled.button<{ $mark?: "open" | "active" }>`
  position: relative;
  width: 34px;
  height: 32px;
  display: grid;
  place-items: center;
  border-radius: 4px;
  background: ${(p) => (p.$mark === "active" ? "#2c2e30" : "none")};
  ${(p) => p.$mark && css`
    &::after {
      content: "";
      position: absolute;
      bottom: 0;
      left: 50%;
      transform: translateX(-50%);
      width: ${p.$mark === "active" ? 12 : 4}px;
      height: 2px;
      border-radius: 1px;
      background: ${p.$mark === "active" ? "#4cc2ff" : "#9a9a9a"};
    }
  `}
`;
const Tray = styled.div`
  justify-self: end;
  display: flex;
  align-items: center;
  padding-right: 15px;
`;
const Clock = styled.time`
  width: 53px;
  text-align: right;
  white-space: nowrap;
  span { display: block; }
`;

const WindowsTaskbar = () => (
  <Taskbar>
    <Weather>
      <svg width="20" height="20" viewBox="0 0 40 40">
        <path d="M16 4c-2 8-8 10-14 12 1 8 14 12 20 4Z" fill="#f7a624" />
        <path d="M10 38c-12-1-12-16 0-15 3-10 19-9 20 0 11 0 11 14 1 15Z" fill="#8fb4f2" />
        <path d="M10 38c-8-1-11-7-6-11 8 4 24 4 33 1 2 5-1 9-6 10Z" fill="#b9d2fa" />
      </svg>
      <Badge $x={9} $y={-3}>2</Badge>
      <span>20°C<Muted>Çok bulutlu</Muted></span>
    </Weather>
    <TaskCenter>
      <IconButton $w={30} aria-label="Başlat">
        <svg width="18" height="18" viewBox="0 0 18 18">
          <linearGradient id="win" x1="0" y1="0" x2="1" y2="1"><stop offset="0" stopColor="#7fe0ff" /><stop offset="1" stopColor="#1596ec" /></linearGradient>
          <path d="M0 0h8.500v8.500H0zM9.500 0H18v8.500H9.500zM0 9.500h8.500V18H0zM9.500 9.500H18V18H9.500z" fill="url(#win)" />
        </svg>
      </IconButton>
      <SearchBox>
        <Search size={13} strokeWidth={2} />
        <SearchInput aria-label="Ara" placeholder="Ara" />
        <svg width="39" height="20" viewBox="0 0 78 40">
          <path d="M10 5C24-1 60 0 70 5s10 26 0 31-56 5-64-2S-2 11 10 5Z" fill="#12308c" />
          <path d="M44 4c14-4 26 0 30 10s-2 20-10 24c2-12-4-26-20-34Z" fill="#0a1c5c" />
          <path d="M12 18C10 4 36-2 40 12c1 6-6 8-12 9s-15 4-16-3Z" fill="#f08f9a" />
          <path d="M15 15c1-8 16-10 20-3-6-1-14 0-20 3Z" fill="#fbc4c4" />
          <path d="M18 21c2 8-4 10 0 16M25 21c4 6 2 10 8 15M32 19c8 4 10 12 20 14M37 16c10 0 14 8 28 6M36 13c12-4 18 4 30 2" stroke="#f2a48e" strokeWidth="1.800" fill="none" />
        </svg>
      </SearchBox>
      <TaskButton aria-label="Görev görünümü">
        <svg width="19" height="17" viewBox="0 0 38 34"><rect x="14" y="1" width="23" height="24" rx="2" fill="#e8e8e8" /><rect x="1" y="10" width="26" height="22" rx="2" fill="#8a8a8a" fillOpacity=".9" /></svg>
      </TaskButton>
      <TaskButton $mark="active" aria-label="Edge">
        <svg width="20" height="20" viewBox="0 0 40 40">
          <linearGradient id="edA" x1="0" y1="0" x2="1" y2="0"><stop offset="0" stopColor="#1f9de0" /><stop offset="1" stopColor="#5fd668" /></linearGradient>
          <circle cx="20" cy="20" r="19" fill="#1273c8" />
          <path d="M1 19C3 8 11 1 20 1c11 0 19 8 19 16 0 6-5 9-10 9-4 0-6-2-4-5 1-6-4-9-9-9-8 0-13 4-15 7Z" fill="url(#edA)" />
          <path d="M2 22c1-6 7-9 13-8-6 5-4 16 5 20 5 2 10 1 14-1-6 8-18 8-25 3-5-4-7-9-7-14Z" fill="#1b8ee0" />
          <path d="M24 21c0 4 5 7 12 5-3 5-10 8-15 6-6-2-7-10-2-15 3-1 5 1 5 4Z" fill="#202c3c" fillOpacity=".55" />
        </svg>
      </TaskButton>
      <TaskButton $mark="open" aria-label="Dosya Gezgini">
        <svg width="20" height="18" viewBox="0 0 40 36"><path d="M1 3q0-2 2-2h11l4 5h18q3 0 3 3v23H1Z" fill="#e8a41c" /><path d="M1 12h38v20q0 3-3 3H4q-3 0-3-3Z" fill="#ffd35c" /><path d="M9 24h22v11H9Z" fill="#1a79d0" /></svg>
      </TaskButton>
      <TaskButton $mark="open" aria-label="Ayarlar">
        <svg width="20" height="20" viewBox="0 0 40 40">
          <circle cx="20" cy="20" r="15" fill="#858d96" /><circle cx="20" cy="20" r="16" fill="none" stroke="#858d96" strokeWidth="5" strokeDasharray="7 5.560" />
          <circle cx="20" cy="20" r="8" fill="#eaf3fb" /><circle cx="20" cy="20" r="6" fill="#1769c2" />
        </svg>
      </TaskButton>
      <TaskButton $mark="open" aria-label="M">
        <svg width="19" height="20" viewBox="0 0 38 40"><rect width="38" height="40" fill="#fff" /><rect x="2" y="2" width="34" height="36" fill="#1b1c4e" /><path d="M6 34V6h6l7 12 7-12h6v28h-7V17l-6 10-6-10v17Z" fill="#fff" /></svg>
      </TaskButton>
      <TaskButton $mark="open" aria-label="Excel">
        <svg width="18" height="18" viewBox="0 0 36 36"><rect x="8" y="1" width="27" height="34" rx="2" fill="#21a366" /><rect x="21" y="1" width="14" height="11" fill="#4fd07a" /><rect x="21" y="12" width="14" height="11" fill="#107c41" /><rect x="8" y="23" width="27" height="12" fill="#185c37" /><rect x="1" y="13" width="17" height="17" rx="2" fill="#107c41" /><path d="m6 17 7 9M13 17l-7 9" stroke="#fff" strokeWidth="2.500" /></svg>
      </TaskButton>
    </TaskCenter>
    <Tray>
      <IconButton $w={24} $color="#fff" aria-label="Gizli simgeler"><ChevronUp size={13} /></IconButton>
      <IconButton $w={26} $color="#ddd" aria-label="OneDrive">
        <svg width="13" height="12" viewBox="0 0 26 24"><path d="M6 18C-1 18 0 9 6 10c1-8 13-9 15 0 4 1 5 8 0 8Z" fill="#d8d8d8" /><circle cx="19" cy="16" r="6" fill="#8a8a8a" /></svg>
      </IconButton>
      <IconButton $w={25} $color="#ddd" aria-label="Ses çıkışı"><Draw size={13} vb="0 0 26 26" sw={2}><path d="M1 4h14M1 9h10M1 14h6M12 16h4l6-5v14l-6-4h-4Z" /></Draw></IconButton>
      <IconButton $w={24} $color="#fff" aria-label="Wi-Fi"><Wifi size={14} strokeWidth={2} /></IconButton>
      <IconButton $w={14} $color="#fff" aria-label="Ses"><Volume2 size={13} strokeWidth={1.8} /></IconButton>
      <IconButton $w={24} $color="#fff" aria-label="Pil">
        <svg width="14" height="11" viewBox="0 0 28 22"><rect x="2" y="6" width="21" height="13" rx="3" fill="#e8e8e8" stroke="#fff" strokeWidth="2" /><path d="M25 10v5" stroke="#fff" strokeWidth="3" /><path d="M7 0 1 9h5l-2 7 8-10H8l2-6Z" fill="#fff" stroke="#202020" /></svg>
      </IconButton>
      <Clock><span>21:18</span><span>12.06.2026</span></Clock>
    </Tray>
  </Taskbar>
);

export default function App() {
  return (
    <Page>
      <GlobalStyle />
      <Tabs />
      <Address />
      <Bookmarks />
      <AppFrame>
        <TopToolbar />
        <Body>
          <LeftRail />
          <Chart />
          <RightRail />
        </Body>
      </AppFrame>
      <WindowsTaskbar />
    </Page>
  );
}
